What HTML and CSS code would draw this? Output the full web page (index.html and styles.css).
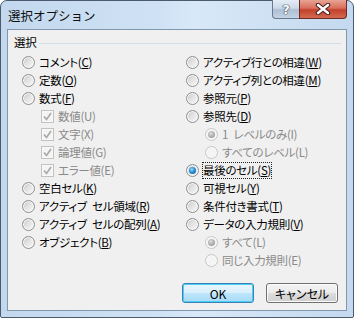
FILE: index.html
```html
<!DOCTYPE html>
<html lang="ja">
<head>
    <meta charset="UTF-8" />
    <title>選択オプション</title>
    <link rel="stylesheet" href="styles.css">
</head>
<body>
    <div class="window">
        <div class="titlebar">
            <span class="title">選択オプション</span>
            <div class="caption-btns">
                <span class="cap help">?</span>
                <span class="cap close">
                    <svg width="16" height="12" viewBox="0 0 16 12">
                        <path d="M3 2 L13 10 M13 2 L3 10" stroke="#4a2020" stroke-width="4.5" stroke-linecap="round" />
                        <path d="M3 2 L13 10 M13 2 L3 10" stroke="#ffffff" stroke-width="2.4" stroke-linecap="round" />
                    </svg>
                </span>
            </div>
        </div>

        <div class="client">
            <div class="section">
                <span>選択</span>
                <i class="rule"></i>
            </div>

            <div class="columns">
                <div class="col">
                    <div class="row"><span class="radio"></span><span class="label">コメント(<u>C</u>)</span></div>
                    <div class="row"><span class="radio"></span><span class="label">定数(<u>O</u>)</span></div>
                    <div class="row"><span class="radio"></span><span class="label">数式(<u>F</u>)</span></div>
                    <div class="row sub dis"><span class="check"><svg width="11" height="11" viewBox="0 0 11 11"><path d="M2 5.5 L4.5 8.5 L9 2" fill="none" stroke="#a8a8a8" stroke-width="1.6" /></svg></span><span class="label">数値(U)</span></div>
                    <div class="row sub dis"><span class="check"><svg width="11" height="11" viewBox="0 0 11 11"><path d="M2 5.5 L4.5 8.5 L9 2" fill="none" stroke="#a8a8a8" stroke-width="1.6" /></svg></span><span class="label">文字(X)</span></div>
                    <div class="row sub dis"><span class="check"><svg width="11" height="11" viewBox="0 0 11 11"><path d="M2 5.5 L4.5 8.5 L9 2" fill="none" stroke="#a8a8a8" stroke-width="1.6" /></svg></span><span class="label">論理値(G)</span></div>
                    <div class="row sub dis"><span class="check"><svg width="11" height="11" viewBox="0 0 11 11"><path d="M2 5.5 L4.5 8.5 L9 2" fill="none" stroke="#a8a8a8" stroke-width="1.6" /></svg></span><span class="label">エラー値(E)</span></div>
                    <div class="row"><span class="radio"></span><span class="label">空白セル(<u>K</u>)</span></div>
                    <div class="row"><span class="radio"></span><span class="label">アクティブ&ensp;セル領域(<u>R</u>)</span></div>
                    <div class="row"><span class="radio"></span><span class="label">アクティブ&ensp;セルの配列(<u>A</u>)</span></div>
                    <div class="row"><span class="radio"></span><span class="label">オブジェクト(<u>B</u>)</span></div>
                </div>
                <div class="col">
                    <div class="row"><span class="radio"></span><span class="label">アクティブ行との相違(<u>W</u>)</span></div>
                    <div class="row"><span class="radio"></span><span class="label">アクティブ列との相違(<u>M</u>)</span></div>
                    <div class="row"><span class="radio"></span><span class="label">参照元(<u>P</u>)</span></div>
                    <div class="row"><span class="radio"></span><span class="label">参照先(<u>D</u>)</span></div>
                    <div class="row sub dis"><span class="radio on"></span><span class="label">1&ensp;レベルのみ(I)</span></div>
                    <div class="row sub dis"><span class="radio"></span><span class="label">すべてのレベル(L)</span></div>
                    <div class="row"><span class="radio on"></span><span class="label focus">最後のセル(<u>S</u>)</span></div>
                    <div class="row"><span class="radio"></span><span class="label">可視セル(<u>Y</u>)</span></div>
                    <div class="row"><span class="radio"></span><span class="label">条件付き書式(<u>T</u>)</span></div>
                    <div class="row"><span class="radio"></span><span class="label">データの入力規則(<u>V</u>)</span></div>
                    <div class="row sub dis"><span class="radio on"></span><span class="label">すべて(L)</span></div>
                    <div class="row sub dis"><span class="radio"></span><span class="label">同じ入力規則(E)</span></div>
                </div>
            </div>

            <div class="footer">
                <button class="btn default">OK</button>
                <button class="btn">キャンセル</button>
            </div>
        </div>
    </div>
</body>
</html>
```

FILE: styles.css
```css
body {
    margin: 0;
    padding: 0;
    background: #ffffff;
    font-family: "Noto Sans CJK JP", "Noto Sans", sans-serif;
    font-size: 12px;
    color: #000;
}

.window {
    width: 354px;
    height: 318px;
    box-sizing: border-box;
    border: 1px solid #4b5a6c;
    border-radius: 7px 7px 2px 2px;
    background: linear-gradient(90deg, #c3d8ee 0%, #cfe2f5 45%, #d8e8f8 55%, #c4d9ef 100%);
    padding: 0 6px 6px;
    display: flex;
    flex-direction: column;
}

/* Title bar */
.titlebar {
    height: 28px;
    display: flex;
    justify-content: space-between;
    align-items: flex-start;
    flex: none;
}

.title {
    font-size: 12.5px;
    line-height: 16px;
    margin: 7px 0 0 1px;
    color: #101010;
}

.caption-btns {
    display: flex;
    margin-top: -1px;
}

.cap {
    height: 19px;
    box-sizing: border-box;
    display: flex;
    align-items: center;
    justify-content: center;
    border: 1px solid #6a7a8e;
    border-top: none;
}

.help {
    width: 27px;
    border-radius: 0 0 0 4px;
    border-right: none;
    background: linear-gradient(#e4edf6 0%, #cbd9e8 45%, #aebfd3 55%, #c3d3e4 100%);
    color: #fff;
    font-family: "DejaVu Sans", sans-serif;
    font-weight: bold;
    font-size: 13px;
    text-shadow: 0 0 1px #2f3d50, 0 0 1px #2f3d50, 0 0 1px #2f3d50;
}

.close {
    width: 48px;
    border-radius: 0 0 4px 0;
    border-color: #6e2a24;
    background: linear-gradient(#e8a493 0%, #d86f5c 45%, #c2412c 55%, #d46a4f 100%);
}

/* Client area */
.client {
    flex: 1;
    border: 1px solid #8197ad;
    background: #f0f0f0;
    display: flex;
    flex-direction: column;
    font-size: 11.5px;
    letter-spacing: -0.3px;
    font-feature-settings: "palt";
}

.section {
    display: flex;
    align-items: center;
    height: 18px;
    margin-top: 3px;
    padding: 0 5px 0 6px;
}

.rule {
    flex: 1;
    height: 1px;
    margin: 2px 0 0 3px;
    background: #d5dde6;
}

.columns {
    display: grid;
    grid-template-columns: 164px 1fr;
    padding-left: 14px;
    margin-top: 2px;
}

.row {
    display: flex;
    align-items: center;
    height: 18px;
    line-height: 18px;
    white-space: nowrap;
}

.row.sub {
    padding-left: 19px;
}

.label {
    margin-left: 4px;
}

.dis .label {
    color: #8a8a8a;
}

u {
    text-underline-offset: 1px;
}

.focus {
    outline: 1px dotted #222;
    outline-offset: 0;
    line-height: 15px;
}

/* Radio buttons */
.radio {
    width: 13px;
    height: 13px;
    box-sizing: border-box;
    border-radius: 50%;
    border: 1px solid #8e8f8f;
    box-shadow: inset 0 0 0 1px #f8f8f8;
    background: linear-gradient(135deg, #c4c4c4 0%, #e2e2e2 45%, #fafafa 100%);
    position: relative;
    flex: none;
}

.radio.on::after {
    content: "";
    position: absolute;
    left: 2px;
    top: 2px;
    width: 7px;
    height: 7px;
    border-radius: 50%;
    background: radial-gradient(circle at 40% 35%, #9adcff 0%, #2a8fd8 45%, #0c4a8c 100%);
}

.dis .radio {
    border-color: #c6c6c6;
    background: #f4f4f4;
}

.dis .radio.on::after {
    background: radial-gradient(circle at 40% 35%, #dedede 0%, #b0b0b0 50%, #969696 100%);
}

/* Checkbox */
.check {
    width: 13px;
    height: 13px;
    box-sizing: border-box;
    border: 1px solid #c2c2c2;
    box-shadow: inset 0 0 0 1px #f8f8f8;
    background: #f4f4f4;
    display: flex;
    align-items: center;
    justify-content: center;
    flex: none;
}

/* Buttons */
.footer {
    margin-top: auto;
    display: flex;
    justify-content: flex-end;
    gap: 12px;
    padding: 0 8px 7px 0;
}

.btn {
    width: 72px;
    height: 20px;
    padding: 0;
    border: 1px solid #707070;
    border-radius: 3px;
    background: linear-gradient(#f4f4f4 0%, #ebebeb 48%, #dddddd 52%, #cfcfcf 100%);
    box-shadow: inset 0 0 0 1px #fbfbfb;
    font-family: "Noto Sans CJK JP", sans-serif;
    font-feature-settings: "palt";
    font-size: 12px;
    color: #000;
}

.btn.default {
    border-color: #3c7fb1;
    box-shadow: inset 0 0 0 1px #48d0f8;
    background: linear-gradient(#eaf6fd 0%, #d9f0fc 48%, #bee6fd 52%, #a7d9f5 100%);
}
```
